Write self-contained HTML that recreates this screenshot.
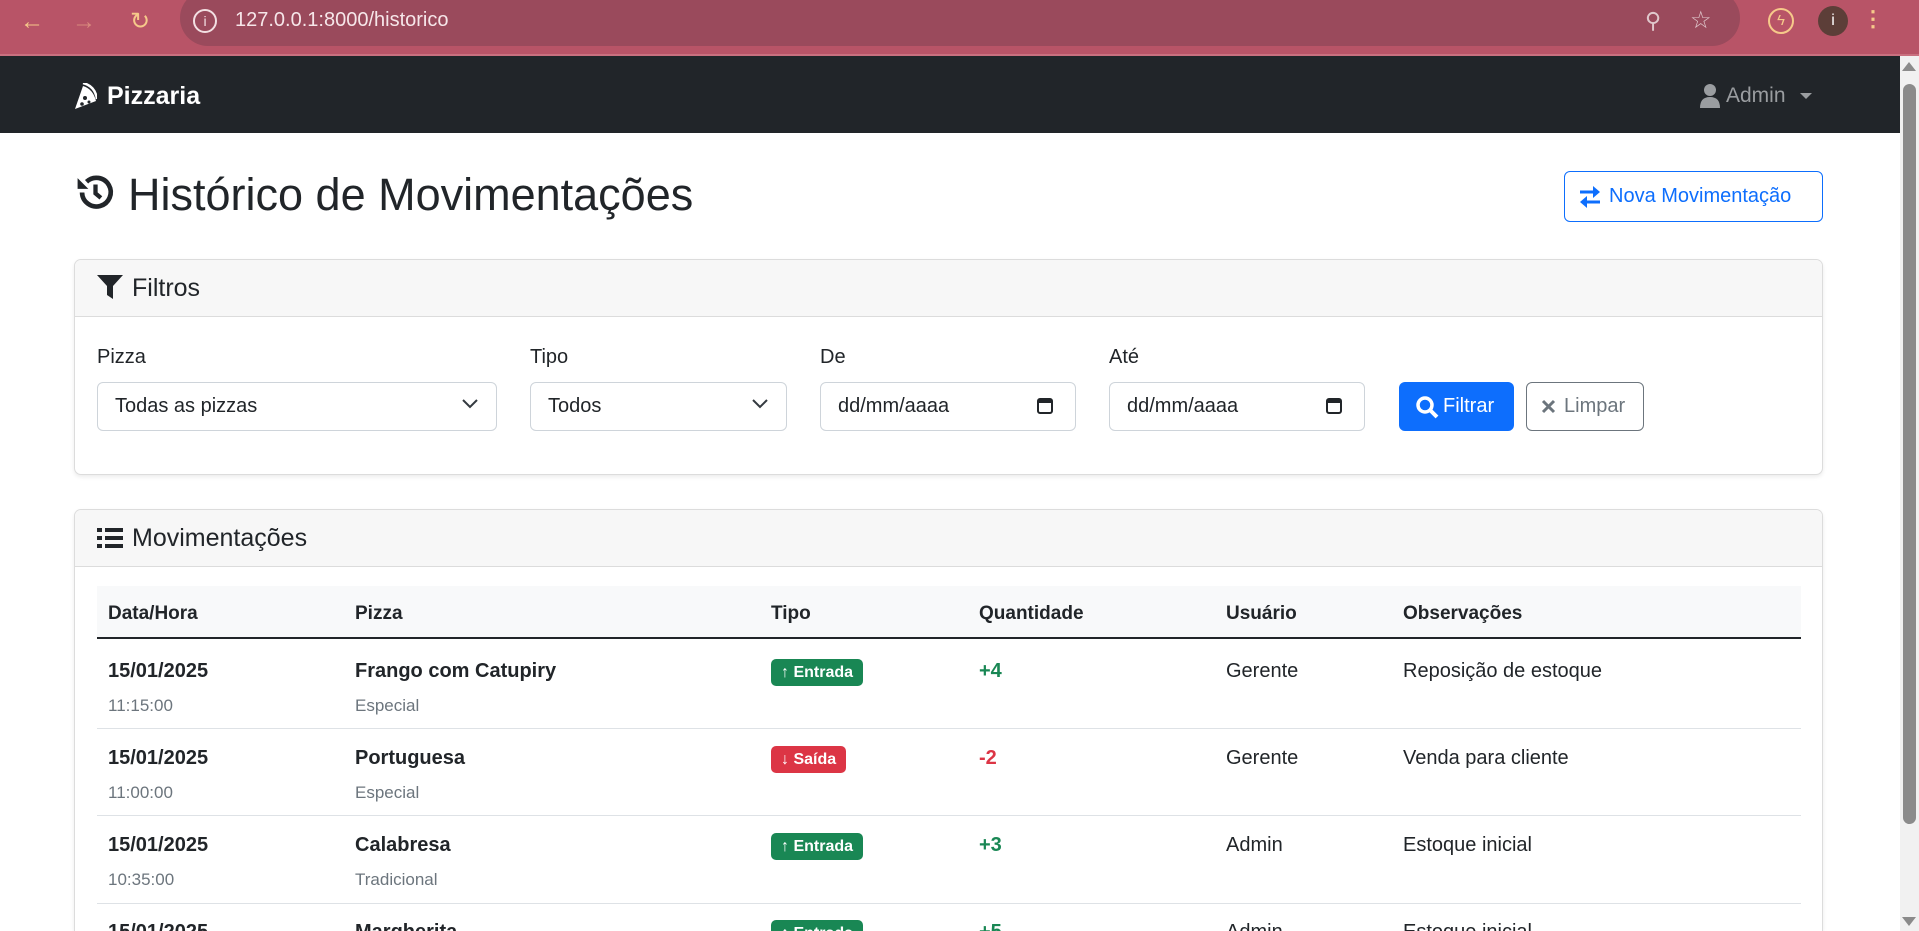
<!DOCTYPE html>
<html><head><meta charset="utf-8">
<style>
*{box-sizing:border-box;margin:0;padding:0}
html,body{width:1919px;height:931px;overflow:hidden}
body{background:#fff;font-family:"Liberation Sans",sans-serif;color:#212529;position:relative}
.a{position:absolute}
.chrome{left:0;top:0;width:1919px;height:56px;background:#b85467;border-bottom:2px solid #c9707f}
.url{left:180px;top:-10px;width:1560px;height:56px;background:#9a4a5c;border-radius:28px}
.nav{left:0;top:56px;width:1900px;height:77px;background:#212529}
.sb{left:1900px;top:56px;width:19px;height:875px;background:#f1f1f1}
.thumb{left:1903px;top:84px;width:13px;height:740px;background:#8b8b8b;border-radius:7px}
.card{border:1px solid #dcdcdc;border-radius:7px;box-shadow:0 2px 4px rgba(0,0,0,.08);background:#fff;overflow:hidden}
.ch{position:absolute;left:0;top:0;right:0;height:57px;background:#f7f7f7;border-bottom:1px solid #dcdcdc;font-size:25px;line-height:57px;padding-left:22px}
.lbl{font-size:20px}
.inp{border:1px solid #ced4da;border-radius:6px;height:49px;font-size:20px;line-height:47px;padding-left:17px;background:#fff}
.th{font-weight:bold;font-size:19px;top:603px}
.b{font-weight:bold;font-size:20px}
.sm{font-size:17px;color:#6c757d}
.badge{color:#fff;font-weight:bold;font-size:16px;border-radius:5px;height:27px;line-height:27px;padding:0 10px}
.g{background:#198754}.r{background:#dc3545}
.tg{color:#198754}.tr{color:#dc3545}
.hr{left:97px;width:1704px;height:1px;background:#dee2e6}
</style></head><body>
<div class="a chrome"></div>
<div class="a url"></div>
<div class="a" style="left:20px;top:8px;color:#f6c98a;font-size:24px">←</div>
<div class="a" style="left:72px;top:8px;color:#d98a7e;font-size:24px">→</div>
<div class="a" style="left:130px;top:7px;color:#f6c98a;font-size:24px">↻</div>
<div class="a" style="left:193px;top:9px;width:24px;height:24px;border:2px solid #f3e0e3;border-radius:50%;color:#f3e0e3;font-size:14px;text-align:center;line-height:20px">i</div>
<div class="a" style="left:235px;top:9px;color:#f6e6e9;font-size:20px">127.0.0.1:8000/historico</div>
<div class="a" style="left:1645px;top:8px;color:#e0c8cc;font-size:22px">⚲</div>
<div class="a" style="left:1690px;top:6px;color:#e0c8cc;font-size:24px">☆</div>
<div class="a" style="left:1768px;top:8px;width:26px;height:26px;border:2px solid #f6c98a;border-radius:50%;color:#f6c98a;font-size:15px;text-align:center;line-height:22px">ϟ</div>
<div class="a" style="left:1818px;top:6px;width:30px;height:30px;border-radius:50%;background:#5c3e38;color:#fff;text-align:center;line-height:30px;font-size:16px">i</div>
<div class="a" style="left:1862px;top:6px;color:#f6c98a;font-size:22px;font-weight:bold">⋮</div>

<div class="a nav"></div>
<svg class="a" style="left:73px;top:83px" width="24" height="27" viewBox="0 0 24 27"><path d="M2 26 L10 3 Q20 6 23 18 Z" fill="#fff"/><path d="M10 0 Q22 3 24 16" stroke="#fff" stroke-width="2.5" fill="none"/><circle cx="12" cy="15" r="2" fill="#212529"/><circle cx="9" cy="21" r="1.8" fill="#212529"/><circle cx="16" cy="19" r="1.5" fill="#212529"/></svg>
<div class="a" style="left:107px;top:82px;color:#fff;font-weight:bold;font-size:25px">Pizzaria</div>
<svg class="a" style="left:1700px;top:84px" width="20" height="24" viewBox="0 0 20 24"><circle cx="10" cy="6" r="6" fill="#9a9da0"/><path d="M0 24 Q0 13 10 13 Q20 13 20 24Z" fill="#9a9da0"/></svg>
<div class="a" style="left:1726px;top:84px;color:#9a9da0;font-size:21px">Admin</div>
<div class="a" style="left:1800px;top:93px;border-left:6px solid transparent;border-right:6px solid transparent;border-top:6px solid #9a9da0"></div>
<div class="a sb"></div><div class="a thumb"></div>
<div class="a" style="left:1902px;top:62px;border-left:7px solid transparent;border-right:7px solid transparent;border-bottom:9px solid #8b8b8b"></div>
<div class="a" style="left:1902px;top:917px;border-left:7px solid transparent;border-right:7px solid transparent;border-top:9px solid #8b8b8b"></div>

<svg class="a" style="left:73px;top:171px" width="45" height="43" viewBox="0 0 24 24"><path d="M4.5 12 A8 8 0 1 0 7 6" stroke="#212529" stroke-width="2.6" fill="none"/><path d="M2 4 L2 10 L8 10Z" fill="#212529"/><path d="M12 7.5 V12.5 L15 15" stroke="#212529" stroke-width="2.4" fill="none"/></svg>
<div class="a" style="left:128px;top:168px;font-size:45px;line-height:54px">Histórico de Movimentações</div>
<div class="a" style="left:1564px;top:171px;width:259px;height:51px;border:1px solid #0d6efd;border-radius:6px;color:#0d6efd;font-size:20px;line-height:49px;padding-left:44px">Nova Movimentação</div>
<svg class="a" style="left:1579px;top:185px" width="22" height="24" viewBox="0 0 22 24"><path d="M1 7 H19" stroke="#0d6efd" stroke-width="3"/><path d="M14 1 L21 7 L14 13Z" fill="#0d6efd"/><path d="M3 17 H21" stroke="#0d6efd" stroke-width="3"/><path d="M8 11 L1 17 L8 23Z" fill="#0d6efd"/></svg>

<div class="a card" style="left:74px;top:259px;width:1749px;height:216px">
<div class="ch"><svg style="vertical-align:-3px;margin-right:9px" width="26" height="24" viewBox="0 0 26 24"><path d="M0 0 H26 L16 11 V24 L10 20 V11Z" fill="#212529"/></svg>Filtros</div>
</div>
<div class="a lbl" style="left:97px;top:346px">Pizza</div>
<div class="a lbl" style="left:530px;top:346px">Tipo</div>
<div class="a lbl" style="left:820px;top:346px">De</div>
<div class="a lbl" style="left:1109px;top:346px">Até</div>
<div class="a inp" style="left:97px;top:382px;width:400px">Todas as pizzas</div>
<div class="a inp" style="left:530px;top:382px;width:257px">Todos</div>
<div class="a inp" style="left:820px;top:382px;width:256px">dd/mm/aaaa</div>
<div class="a inp" style="left:1109px;top:382px;width:256px">dd/mm/aaaa</div>
<svg class="a" style="left:462px;top:399px" width="16" height="10"><path d="M1 1 L8 8 L15 1" stroke="#343a40" stroke-width="2" fill="none"/></svg>
<svg class="a" style="left:752px;top:399px" width="16" height="10"><path d="M1 1 L8 8 L15 1" stroke="#343a40" stroke-width="2" fill="none"/></svg>
<svg class="a" style="left:1037px;top:396px" width="16" height="18"><rect x="1" y="3" width="14" height="14" rx="2" fill="none" stroke="#212529" stroke-width="2"/><rect x="1" y="3" width="14" height="4" fill="#212529"/></svg>
<svg class="a" style="left:1326px;top:396px" width="16" height="18"><rect x="1" y="3" width="14" height="14" rx="2" fill="none" stroke="#212529" stroke-width="2"/><rect x="1" y="3" width="14" height="4" fill="#212529"/></svg>
<div class="a" style="left:1399px;top:382px;width:115px;height:49px;background:#0d6efd;border-radius:6px;color:#fff;font-size:20px;line-height:49px;padding-left:44px">Filtrar</div>
<svg class="a" style="left:1415px;top:395px" width="24" height="24" viewBox="0 0 24 24"><circle cx="10" cy="10" r="7" stroke="#fff" stroke-width="3.5" fill="none"/><path d="M15 15 L22 22" stroke="#fff" stroke-width="4"/></svg>
<div class="a" style="left:1526px;top:382px;width:118px;height:49px;border:1px solid #6c757d;border-radius:6px;color:#6c757d;font-size:20px;line-height:47px;padding-left:37px">Limpar</div>
<svg class="a" style="left:1541px;top:399px" width="15" height="15"><path d="M2 2 L13 13 M13 2 L2 13" stroke="#6c757d" stroke-width="3"/></svg>

<div class="a card" style="left:74px;top:509px;width:1749px;height:422px;border-bottom:none;border-radius:7px 7px 0 0">
<div class="ch"><svg style="vertical-align:-3px;margin-right:9px" width="26" height="22" viewBox="0 0 26 22"><rect x="0" y="1" width="5" height="4" fill="#212529"/><rect x="0" y="9" width="5" height="4" fill="#212529"/><rect x="0" y="17" width="5" height="4" fill="#212529"/><rect x="8" y="1" width="18" height="4" fill="#212529"/><rect x="8" y="9" width="18" height="4" fill="#212529"/><rect x="8" y="17" width="18" height="4" fill="#212529"/></svg>Movimentações</div>
</div>
<div class="a" style="left:97px;top:586px;width:1704px;height:53px;background:#f8f9fa;border-bottom:2px solid #212529"></div>
<div class="a th" style="left:108px">Data/Hora</div>
<div class="a th" style="left:355px">Pizza</div>
<div class="a th" style="left:771px">Tipo</div>
<div class="a th" style="left:979px">Quantidade</div>
<div class="a th" style="left:1226px">Usuário</div>
<div class="a th" style="left:1403px">Observações</div>

<div class="a hr" style="top:728px"></div>
<div class="a hr" style="top:815px"></div>
<div class="a hr" style="top:903px"></div>

<div class="a b" style="left:108px;top:660px">15/01/2025</div>
<div class="a sm" style="left:108px;top:696px">11:15:00</div>
<div class="a b" style="left:355px;top:660px">Frango com Catupiry</div>
<div class="a sm" style="left:355px;top:696px">Especial</div>
<div class="a badge g" style="left:771px;top:659px">↑ Entrada</div>
<div class="a b tg" style="left:979px;top:660px">+4</div>
<div class="a" style="left:1226px;top:660px;font-size:20px">Gerente</div>
<div class="a" style="left:1403px;top:660px;font-size:20px">Reposição de estoque</div>

<div class="a b" style="left:108px;top:747px">15/01/2025</div>
<div class="a sm" style="left:108px;top:783px">11:00:00</div>
<div class="a b" style="left:355px;top:747px">Portuguesa</div>
<div class="a sm" style="left:355px;top:783px">Especial</div>
<div class="a badge r" style="left:771px;top:746px">↓ Saída</div>
<div class="a b tr" style="left:979px;top:747px">-2</div>
<div class="a" style="left:1226px;top:747px;font-size:20px">Gerente</div>
<div class="a" style="left:1403px;top:747px;font-size:20px">Venda para cliente</div>

<div class="a b" style="left:108px;top:834px">15/01/2025</div>
<div class="a sm" style="left:108px;top:870px">10:35:00</div>
<div class="a b" style="left:355px;top:834px">Calabresa</div>
<div class="a sm" style="left:355px;top:870px">Tradicional</div>
<div class="a badge g" style="left:771px;top:833px">↑ Entrada</div>
<div class="a b tg" style="left:979px;top:834px">+3</div>
<div class="a" style="left:1226px;top:834px;font-size:20px">Admin</div>
<div class="a" style="left:1403px;top:834px;font-size:20px">Estoque inicial</div>

<div class="a" style="left:0;top:905px;width:1900px;height:26px;overflow:hidden">
<div class="a b" style="left:108px;top:16px">15/01/2025</div>
<div class="a b" style="left:355px;top:16px">Margherita</div>
<div class="a badge g" style="left:771px;top:15px">↑ Entrada</div>
<div class="a b tg" style="left:979px;top:16px">+5</div>
<div class="a" style="left:1226px;top:16px;font-size:20px">Admin</div>
<div class="a" style="left:1403px;top:16px;font-size:20px">Estoque inicial</div>
</div>
</body></html>
